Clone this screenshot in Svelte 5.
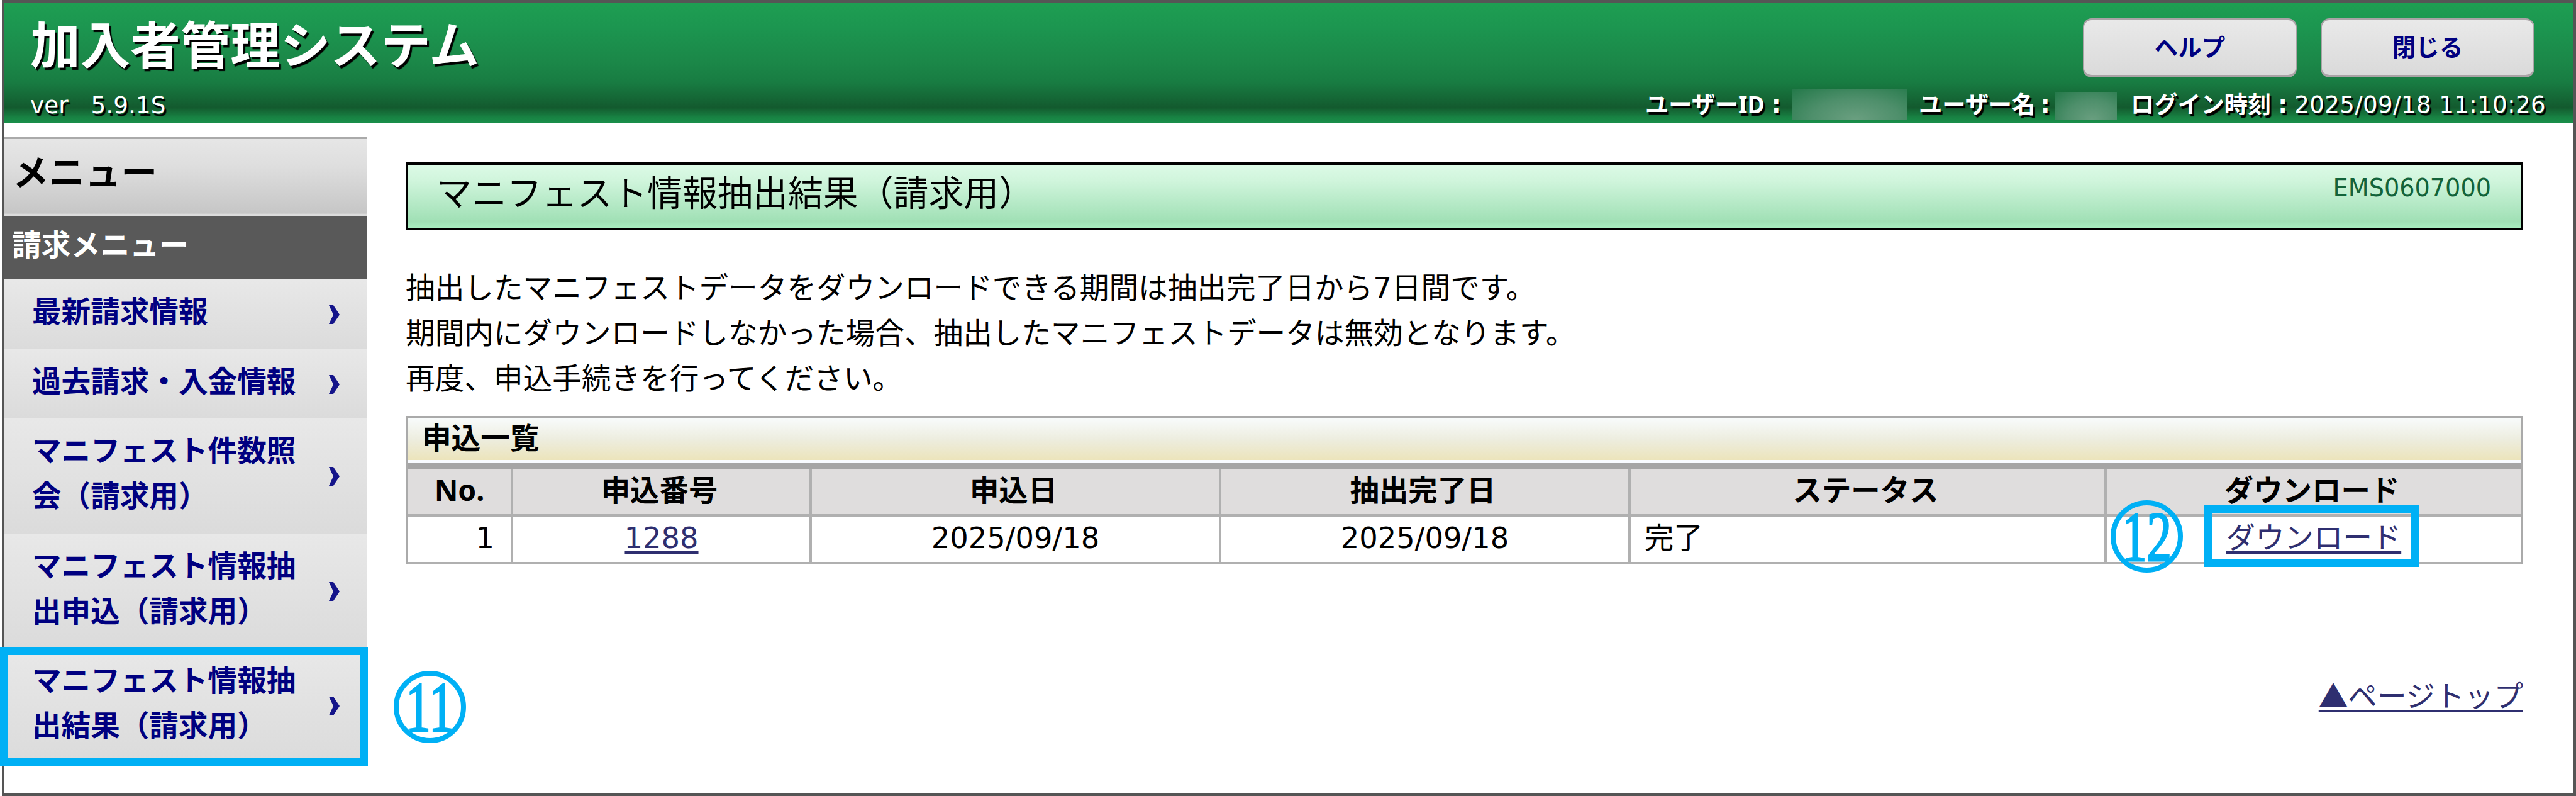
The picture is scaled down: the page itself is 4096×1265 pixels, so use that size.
<script lang="ts">
  interface MenuItem {
    lines: string[];
    current?: boolean;
  }

  interface Application {
    no: number;
    id: string;
    appliedOn: string;
    extractedOn: string;
    status: string;
  }

  const menu: MenuItem[] = [
    { lines: ['最新請求情報'] },
    { lines: ['過去請求・入金情報'] },
    { lines: ['マニフェスト件数照', '会（請求用）'] },
    { lines: ['マニフェスト情報抽', '出申込（請求用）'] },
    { lines: ['マニフェスト情報抽', '出結果（請求用）'], current: true }
  ];

  const notes = [
    '抽出したマニフェストデータをダウンロードできる期間は抽出完了日から7日間です。',
    '期間内にダウンロードしなかった場合、抽出したマニフェストデータは無効となります。',
    '再度、申込手続きを行ってください。'
  ];

  const columns = ['No.', '申込番号', '申込日', '抽出完了日', 'ステータス', 'ダウンロード'];

  const applications: Application[] = [
    { no: 1, id: '1288', appliedOn: '2025/09/18', extractedOn: '2025/09/18', status: '完了' }
  ];
</script>

<div class="window">
  <header class="header">
    <div class="brand">
      <h1>加入者管理システム</h1>
      <p class="version"><span>ver</span><span>5.9.1S</span></p>
    </div>
    <div class="session">
      <div class="buttons">
        <button type="button">ヘルプ</button>
        <button type="button">閉じる</button>
      </div>
      <div class="user">
        <span class="user__id"><b>ユーザーID</b><i>:</i></span>
        <span class="mask mask--id"></span>
        <span class="user__name"><b>ユーザー名</b><i>:</i></span>
        <span class="mask mask--name"></span>
        <span class="user__login"><b>ログイン時刻</b><i>:</i><span class="time">2025/09/18 11:10:26</span></span>
      </div>
    </div>
  </header>

  <div class="body">
    <nav class="sidebar">
      <h2>メニュー</h2>
      <h3>請求メニュー</h3>
      <ul>
        {#each menu as item}
          <li>
            <a href="#top">
              <span class="label">
                {#each item.lines as line}
                  <span>{line}</span>
                {/each}
              </span>
              <svg class="chevron" viewBox="0 0 18 30">
                <path d="M1 0 H8 L18 15 L8 30 H1 L8 15 Z" />
              </svg>
            </a>
            {#if item.current}
              <span class="marker marker--menu"></span>
              <span class="badge badge--menu"><span>11</span></span>
            {/if}
          </li>
        {/each}
      </ul>
    </nav>

    <main class="content">
      <div class="page-title">
        <h2>マニフェスト情報抽出結果（請求用）</h2>
        <span class="screen-id">EMS0607000</span>
      </div>

      <div class="notes">
        {#each notes as note}
          <p>{note}</p>
        {/each}
      </div>

      <section class="list">
        <h3 class="caption">申込一覧</h3>
        <div class="row row--head">
          {#each columns as column}
            <div class="cell">{column}</div>
          {/each}
        </div>
        {#each applications as app}
          <div class="row">
            <div class="cell cell--right">{app.no}</div>
            <div class="cell"><a href="#top">{app.id}</a></div>
            <div class="cell">{app.appliedOn}</div>
            <div class="cell">{app.extractedOn}</div>
            <div class="cell cell--left">{app.status}</div>
            <div class="cell cell--download">
              <a href="#top">ダウンロード</a>
              <span class="marker marker--download"></span>
              <span class="badge badge--download"><span>12</span></span>
            </div>
          </div>
        {/each}
      </section>

      <a class="page-top" href="#top">▲ページトップ</a>
    </main>
  </div>
</div>

<style>
  :global(body) {
    background: #fff;
    overflow: hidden;
  }

  .window,
  .window * {
    box-sizing: border-box;
  }

  .window {
    width: 4093px;
    height: 1265px;
    margin-left: 3px;
    border: 4px solid #555;
    border-left-width: 3px;
    background: #fff;
    color: #000;
    font-family: 'DejaVu Sans', 'Noto Sans CJK JP', sans-serif;
    font-size: 46.4px;
    line-height: 72px;
  }

  h1,
  h2,
  h3,
  p,
  ul {
    margin: 0;
    padding: 0;
  }

  /* header */
  .header {
    display: flex;
    justify-content: space-between;
    height: 192px;
    background: linear-gradient(#1e9e52 0%, #1c9650 20%, #1b8748 50%, #187c42 66%, #135a2e 87%, #188243 95%, #1a914b 100%);
    color: #fff;
    text-shadow: 3px 4px 1px #000;
  }

  .brand {
    padding: 20px 0 0 42px;
  }

  h1 {
    font-size: 79.6px;
    line-height: 100px;
    font-weight: 700;
  }

  .version {
    display: flex;
    gap: 36px;
    margin-top: 17px;
    font-size: 37.4px;
    line-height: 52px;
  }

  .buttons {
    display: flex;
    justify-content: flex-end;
    gap: 38px;
    padding: 25px 62px 0 0;
  }

  button {
    width: 340px;
    height: 94px;
    padding: 0 0 6px;
    border: 3px solid #aaa3a6;
    border-width: 3px 2px 4px;
    border-radius: 14px;
    background: linear-gradient(#e9e9e9, #dadada);
    color: #000080;
    font-family: 'Noto Sans CJK JP', sans-serif;
    font-size: 37.5px;
    font-weight: 700;
  }

  .user {
    display: flex;
    align-items: center;
    justify-content: flex-end;
    height: 52px;
    margin-top: 17px;
    padding-right: 41px;
    font-size: 37.2px;
    line-height: 52px;
    white-space: pre;
  }

  .user b {
    font-family: 'Noto Sans', 'Noto Sans CJK JP', sans-serif;
  }

  .user i {
    width: 37px;
    font-style: normal;
    font-weight: 700;
    text-align: center;
  }

  .user__id,
  .user__name,
  .user__login {
    display: flex;
  }

  .user__id {
    width: 234px;
  }

  .user__name {
    width: 217px;
    margin-left: 19px;
  }

  .user__login {
    width: 663px;
    margin-left: 22px;
  }

  .time {
    letter-spacing: 0.35px;
  }

  .mask {
    height: 48px;
    background: linear-gradient(#1b6d3c, #5b9b76);
  }

  .mask--id {
    width: 182px;
    background: radial-gradient(ellipse at 55% 100%, #6a9f80, #4e8f6b 50%, #24794a 100%);
  }

  .mask--name {
    width: 98px;
    height: 45px;
    margin-top: 4px;
    background: radial-gradient(ellipse at 60% 100%, #6a9f80, #4e8f6b 50%, #24794a 100%);
  }

  .body {
    display: flex;
    padding-top: 21px;
  }

  /* sidebar */
  .sidebar {
    width: 577px;
    font-weight: 700;
  }

  .sidebar h2 {
    height: 127px;
    padding: 19px 0 0 14px;
    border-top: 4px solid #aaa;
    background: linear-gradient(#e6e6e6, #dedede 35%, #c6c6c6 96%, #dcdcdc 97%);
    font-size: 57.5px;
    font-weight: 700;
  }

  .sidebar h3 {
    height: 100px;
    padding: 10px 0 0 13px;
    background: #595959;
    color: #fff;
    font-size: 46.8px;
  }

  ul {
    list-style: none;
  }

  li {
    position: relative;
  }

  li a {
    display: flex;
    align-items: center;
    justify-content: space-between;
    padding: 16px 43px 22.6px 45px;
    background: linear-gradient(#e8e8e8, #dbdbdb);
    color: #000080;
    font-size: 46.6px;
    text-decoration: none;
  }

  .label span {
    display: block;
    white-space: nowrap;
  }

  .chevron {
    position: relative;
    top: 4px;
    width: 18px;
    height: 30px;
    fill: #14148a;
  }

  /* content */
  .content {
    display: flex;
    flex-direction: column;
    width: 3367px;
    margin: 41px 0 0 62px;
  }

  .page-title {
    display: flex;
    justify-content: space-between;
    height: 108px;
    padding: 10px 47px 0 45px;
    border: 4px solid #000;
    background: linear-gradient(#dcfae6, #d0f5dc 25%, #a0e0b5 90%, #a8eec0);
  }

  .page-title h2 {
    font-size: 55.9px;
    font-weight: 400;
  }

  .screen-id {
    color: #12633a;
    font-size: 38.2px;
    line-height: 54px;
  }

  .notes {
    margin-top: 56px;
    font-size: 46.65px;
  }

  .list {
    margin-top: 23px;
    border: 4px solid #aaa;
    border-width: 4px 4px 0;
  }

  .caption {
    height: 80px;
    padding-left: 22px;
    border-bottom: 9px solid #a5a5a5;
    background: linear-gradient(#f8fbfb 0, #ededdf 33px, #ece4bb 66px, #f8fbff 66px);
    font-size: 46.6px;
    line-height: 64px;
  }

  .row {
    display: grid;
    grid-template-columns: 163px 475px 651px 651px 757px 1fr;
    height: 76px;
    border-bottom: 4px solid #b0b0b0;
  }

  .row--head {
    background: #dfdddd;
    font-family: 'Noto Sans', 'Noto Sans CJK JP', sans-serif;
    font-weight: 700;
  }

  .cell {
    border-left: 4px solid #b0b0b0;
    text-align: center;
    line-height: 69px;
  }

  .row--head .cell {
    padding-right: 6px;
    line-height: 66px;
  }

  .cell:first-child {
    border-left: 0;
  }

  .row--head .cell:first-child {
    padding-right: 0;
  }

  .cell--right {
    padding-right: 26px;
    text-align: right;
  }

  .cell--left {
    padding-left: 22px;
    text-align: left;
  }

  .cell--download {
    position: relative;
  }

  .row a,
  .page-top {
    color: #2f2f70;
    text-decoration: underline;
    text-decoration-thickness: 4px;
    text-underline-offset: 5px;
    text-decoration-skip-ink: none;
  }

  .page-top {
    align-self: flex-end;
    margin-top: 170px;
    font-family: 'Noto Sans CJK JP', sans-serif;
    font-size: 46.6px;
  }

  /* guide markers laid over the screen */
  .marker {
    position: absolute;
    border: 13px solid #00b0f5;
  }

  .marker--menu {
    top: -2px;
    left: -6px;
    width: 585px;
    height: 190px;
  }

  .marker--download {
    top: -18px;
    left: 154px;
    width: 342px;
    height: 98px;
  }

  .badge {
    position: absolute;
    display: flex;
    align-items: center;
    justify-content: center;
    width: 115px;
    height: 115px;
    border: 8px solid #00b0f5;
    border-radius: 50%;
    color: #00b0f5;
    font-family: 'Liberation Serif', serif;
    font-size: 113px;
    font-weight: 400;
    line-height: 1;
  }

  .badge span {
    transform: scaleX(0.7);
    -webkit-text-stroke: 3px #00b0f5;
  }

  .badge--menu {
    top: 36px;
    left: 620px;
  }

  .badge--download {
    top: -26px;
    left: 6px;
  }
</style>
